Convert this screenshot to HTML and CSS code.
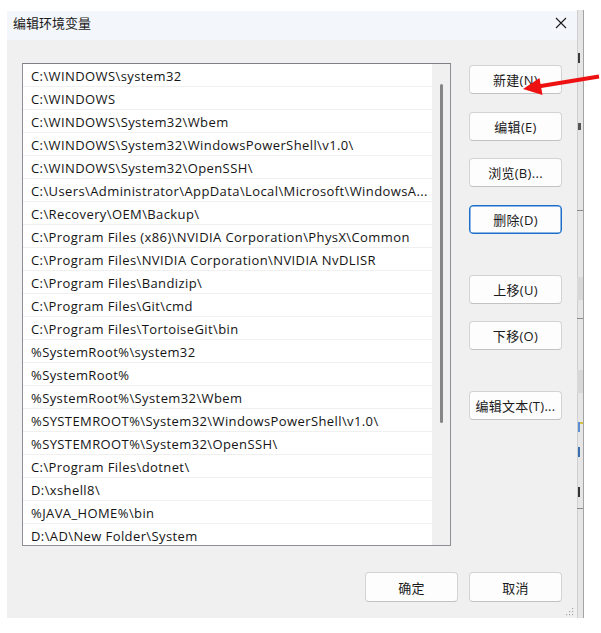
FILE: index.html
```html
<!DOCTYPE html>
<html lang="zh-CN">
<head>
<meta charset="utf-8">
<title>编辑环境变量</title>
<link rel="stylesheet" href="styles.css">
</head>
<body>
<div class="screen">
  <div class="dialog">
    <div class="titlebar">
      <span class="title">编辑环境变量</span>
      <span class="close">
        <svg width="12" height="12" viewBox="0 0 12 12"><path d="M1 1 L11 11 M11 1 L1 11" stroke="#1b1b1b" stroke-width="1.1" fill="none"/></svg>
      </span>
    </div>
    <div class="body">
      <div class="main">
        <div class="listbox">
          <div class="rows">
            <div class="row">C:\WINDOWS\system32</div>
            <div class="row">C:\WINDOWS</div>
            <div class="row">C:\WINDOWS\System32\Wbem</div>
            <div class="row">C:\WINDOWS\System32\WindowsPowerShell\v1.0\</div>
            <div class="row">C:\WINDOWS\System32\OpenSSH\</div>
            <div class="row">C:\Users\Administrator\AppData\Local\Microsoft\WindowsA...</div>
            <div class="row">C:\Recovery\OEM\Backup\</div>
            <div class="row">C:\Program Files (x86)\NVIDIA Corporation\PhysX\Common</div>
            <div class="row">C:\Program Files\NVIDIA Corporation\NVIDIA NvDLISR</div>
            <div class="row">C:\Program Files\Bandizip\</div>
            <div class="row">C:\Program Files\Git\cmd</div>
            <div class="row">C:\Program Files\TortoiseGit\bin</div>
            <div class="row">%SystemRoot%\system32</div>
            <div class="row">%SystemRoot%</div>
            <div class="row">%SystemRoot%\System32\Wbem</div>
            <div class="row">%SYSTEMROOT%\System32\WindowsPowerShell\v1.0\</div>
            <div class="row">%SYSTEMROOT%\System32\OpenSSH\</div>
            <div class="row">C:\Program Files\dotnet\</div>
            <div class="row">D:\xshell8\</div>
            <div class="row">%JAVA_HOME%\bin</div>
            <div class="row">D:\AD\New Folder\System</div>
          </div>
          <div class="vscroll"><div class="thumb"></div></div>
        </div>
        <div class="side">
          <button class="btn">新建(N)</button>
          <button class="btn s1">编辑(E)</button>
          <button class="btn s2">浏览(B)...</button>
          <button class="btn s1 focus">删除(D)</button>
          <button class="btn s3">上移(U)</button>
          <button class="btn s2">下移(O)</button>
          <button class="btn s3">编辑文本(T)...</button>
        </div>
      </div>
      <div class="footer">
        <button class="btn wide">确定</button>
        <button class="btn wide">取消</button>
      </div>
    </div>
    <svg class="grip" width="9" height="9" viewBox="0 0 9 9">
      <rect x="7" y="1" width="1.2" height="1.2" fill="#a8a8a8"/>
      <rect x="4" y="4" width="1.2" height="1.2" fill="#a8a8a8"/>
      <rect x="7" y="4" width="1.2" height="1.2" fill="#a8a8a8"/>
      <rect x="1" y="7" width="1.2" height="1.2" fill="#a8a8a8"/>
      <rect x="4" y="7" width="1.2" height="1.2" fill="#a8a8a8"/>
      <rect x="7" y="7" width="1.2" height="1.2" fill="#a8a8a8"/>
    </svg>
  </div>
  <div class="backwin">
    <svg width="6" height="608" viewBox="0 0 6 608">
      <rect x="0" y="0" width="6" height="608" fill="#e6e6e6"/>
      <rect x="0" y="0" width="1" height="608" fill="#cfcfcf"/>
      <rect x="1" y="43" width="2" height="10" fill="#3a3a3a"/>
      <rect x="1" y="113" width="3" height="7" fill="#555"/>
      <rect x="0" y="200" width="6" height="1" fill="#8a8a8a"/>
      <rect x="0" y="267" width="6" height="23" fill="#d8d8d8"/>
      <rect x="0" y="308" width="6" height="1" fill="#8a8a8a"/>
      <rect x="0" y="360" width="6" height="23" fill="#d8d8d8"/>
      <rect x="1" y="412" width="2" height="10" fill="#5b8fd0"/>
      <rect x="3" y="412" width="3" height="2" fill="#d8c34a"/>
      <rect x="1" y="437" width="2" height="10" fill="#3a6fb0"/>
      <rect x="1" y="477" width="2" height="10" fill="#333"/>
      <rect x="0" y="498" width="6" height="1" fill="#8a8a8a"/>
    </svg>
  </div>
  <svg class="arrow" width="601" height="633" viewBox="0 0 601 633">
    <line x1="599" y1="76.5" x2="538" y2="86.5" stroke="#ee1111" stroke-width="4.2"/>
    <polygon points="523,89 539.5,78 542.5,95" fill="#ee1111"/>
  </svg>
</div>
</body>
</html>
```

FILE: styles.css
```css
html, body {
  margin: 0;
  padding: 0;
  background: #ffffff;
}

.screen {
  position: relative;
  width: 601px;
  height: 633px;
  display: flex;
  align-items: flex-start;
  padding: 11px 0 0 7px;
  box-sizing: border-box;
  font-family: "Open Sans", "Noto Sans CJK SC", sans-serif;
  color: #1a1a1a;
}

.dialog {
  position: relative;
  width: 570px;
  height: 607px;
  background: #f0f0f0;
  display: flex;
  flex-direction: column;
}

.titlebar {
  height: 29px;
  background: #f3f6fb;
  display: flex;
  justify-content: space-between;
  align-items: flex-start;
  padding: 3px 10px 0 6px;
  box-sizing: border-box;
}

.title {
  font-size: 13px;
  line-height: 18px;
  color: #1b1b1b;
}

.close {
  display: flex;
  padding-top: 3px;
}

.body {
  padding: 23px 15px 0 15px;
  display: flex;
  flex-direction: column;
}

.main {
  display: flex;
  gap: 18px;
}

.listbox {
  width: 429px;
  height: 483px;
  box-sizing: border-box;
  border: 1px solid #8d8f94;
  border-top-color: #7e8086;
  background: #ffffff;
  display: flex;
}

.rows {
  width: 409px;
  overflow: hidden;
}

.row {
  height: 23px;
  box-sizing: border-box;
  border-bottom: 1px solid #f0f0f0;
  padding: 2px 0 0 8px;
  font-size: 13px;
  letter-spacing: 0.4px;
  line-height: 20px;
  white-space: nowrap;
  overflow: hidden;
  color: #141414;
}

.vscroll {
  width: 18px;
  background: #f0f0f0;
  display: flex;
  justify-content: center;
  padding-top: 20px;
  box-sizing: border-box;
}

.thumb {
  width: 3px;
  height: 339px;
  border-radius: 2px;
  background: #868686;
}

.side {
  width: 93px;
  padding-top: 2px;
  display: flex;
  flex-direction: column;
}

.btn {
  width: 93px;
  height: 29px;
  box-sizing: border-box;
  border: 1px solid #d3d3d3;
  border-bottom-color: #c2c2c2;
  border-radius: 4px;
  background: #fdfdfd;
  font-family: "Open Sans", "Noto Sans CJK SC", sans-serif;
  font-size: 13px;
  letter-spacing: 0.3px;
  color: #1a1a1a;
  padding: 0;
  margin: 0;
}

.s1 { margin-top: 18px; }
.s2 { margin-top: 17px; }
.s3 { margin-top: 41px; }

.focus {
  border: 1px solid #1b6fc8;
  box-shadow: inset 0 0 0 0.5px #1b6fc8;
}

.footer {
  display: flex;
  justify-content: flex-end;
  gap: 11px;
  margin-top: 26px;
}

.wide {
  height: 30px;
}

.grip {
  position: absolute;
  right: 3px;
  bottom: 2px;
}

.backwin {
  width: 7px;
  height: 608px;
  margin-top: -1px;
  box-sizing: border-box;
  border-right: 1px solid #a3a3a3;
  display: flex;
}

.arrow {
  position: absolute;
  left: 0;
  top: 0;
  pointer-events: none;
}
```
